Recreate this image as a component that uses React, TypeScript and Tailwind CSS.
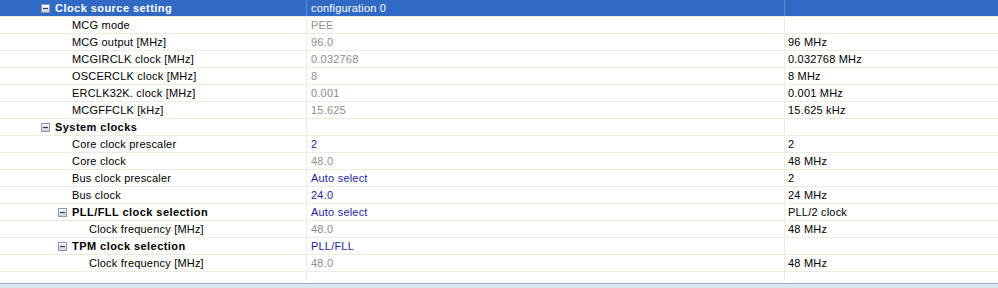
import React from "react";

type Row = {
  label: string;
  depth: number;
  group?: boolean;
  value?: string;
  tone?: "gray" | "blue";
  unit?: string;
};

const rows: Row[] = [
  { label: "MCG mode", depth: 1, value: "PEE", tone: "gray" },
  { label: "MCG output [MHz]", depth: 1, value: "96.0", tone: "gray", unit: "96 MHz" },
  { label: "MCGIRCLK clock [MHz]", depth: 1, value: "0.032768", tone: "gray", unit: "0.032768 MHz" },
  { label: "OSCERCLK clock [MHz]", depth: 1, value: "8", tone: "gray", unit: "8 MHz" },
  { label: "ERCLK32K. clock [MHz]", depth: 1, value: "0.001", tone: "gray", unit: "0.001 MHz" },
  { label: "MCGFFCLK [kHz]", depth: 1, value: "15.625", tone: "gray", unit: "15.625 kHz" },
  { label: "System clocks", depth: 0, group: true },
  { label: "Core clock prescaler", depth: 1, value: "2", tone: "blue", unit: "2" },
  { label: "Core clock", depth: 1, value: "48.0", tone: "gray", unit: "48 MHz" },
  { label: "Bus clock prescaler", depth: 1, value: "Auto select", tone: "blue", unit: "2" },
  { label: "Bus clock", depth: 1, value: "24.0", tone: "blue", unit: "24 MHz" },
  { label: "PLL/FLL clock selection", depth: 1, group: true, value: "Auto select", tone: "blue", unit: "PLL/2 clock" },
  { label: "Clock frequency [MHz]", depth: 2, value: "48.0", tone: "gray", unit: "48 MHz" },
  { label: "TPM clock selection", depth: 1, group: true, value: "PLL/FLL", tone: "blue" },
  { label: "Clock frequency [MHz]", depth: 2, value: "48.0", tone: "gray", unit: "48 MHz" },
];

const indent = ["pl-[41px]", "pl-[58px]", "pl-[75px]"];

const Collapse = () => (
  <svg width="9" height="9" viewBox="0 0 9 9" className="shrink-0">
    <defs>
      <linearGradient id="cb" x1="0" y1="0" x2="0" y2="1">
        <stop offset="0" stopColor="#ffffff" />
        <stop offset="1" stopColor="#c9d1de" />
      </linearGradient>
    </defs>
    <rect x="0.5" y="0.5" width="8" height="8" fill="url(#cb)" stroke="#8b98ad" />
    <path d="M2 4.5h5" stroke="#303c58" strokeWidth="1.2" />
  </svg>
);

const Label = ({ row }: { row: Row }) => (
  <div className={`flex items-center h-full ${indent[row.depth]}`}>
    {row.group ? <Collapse /> : <span className="w-[9px] shrink-0" />}
    <span
      className={
        row.group
          ? "ml-[5px] font-bold tracking-[0.45px] whitespace-nowrap"
          : "ml-[5px] tracking-[0.2px] whitespace-nowrap"
      }
    >
      {row.label}
    </span>
  </div>
);

export default function App() {
  return (
    <div
      className="w-[998px] h-[288px] overflow-hidden bg-white flex flex-col text-[11px] leading-[16px] text-black"
      style={{ fontFamily: '"Liberation Sans", Arial, sans-serif' }}
    >
      <div className="flex h-[17px] shrink-0 border-b border-[#efebde]">
        <div className="w-[307px] bg-[#316ac5] text-white border-r border-[#5d8ad2]">
          <div className="flex items-center h-full pl-[41px]">
            <Collapse />
            <span className="ml-[5px] font-bold tracking-[0.45px]">Clock source setting</span>
          </div>
        </div>
        <div className="w-[478px] bg-[#316ac5] text-white border-r border-[#5d8ad2] pl-[4px] tracking-[0.2px]">
          configuration 0
        </div>
        <div className="flex-1 bg-[#316ac5]" />
      </div>

      {rows.map((row, i) => (
        <div key={i} className="flex h-[17px] shrink-0 border-b border-[#efebde]">
          <div className="w-[307px] border-r border-[#efebde]">
            <Label row={row} />
          </div>
          <div
            className={`w-[478px] border-r border-[#efebde] pl-[4px] tracking-[0.2px] ${
              row.tone === "blue" ? "text-[#1f1f9c]" : "text-[#8f8f8f]"
            }`}
          >
            {row.value}
          </div>
          <div className="flex-1 pl-[3px] tracking-[0.2px]">{row.unit}</div>
        </div>
      ))}

      <div className="flex h-[11px] shrink-0">
        <div className="w-[307px] border-r border-[#efebde]" />
        <div className="w-[478px] border-r border-[#efebde]" />
        <div className="flex-1" />
      </div>
      <div className="flex-1 border-t border-[#95abcb] bg-[#dbe4f1]" />
    </div>
  );
}
